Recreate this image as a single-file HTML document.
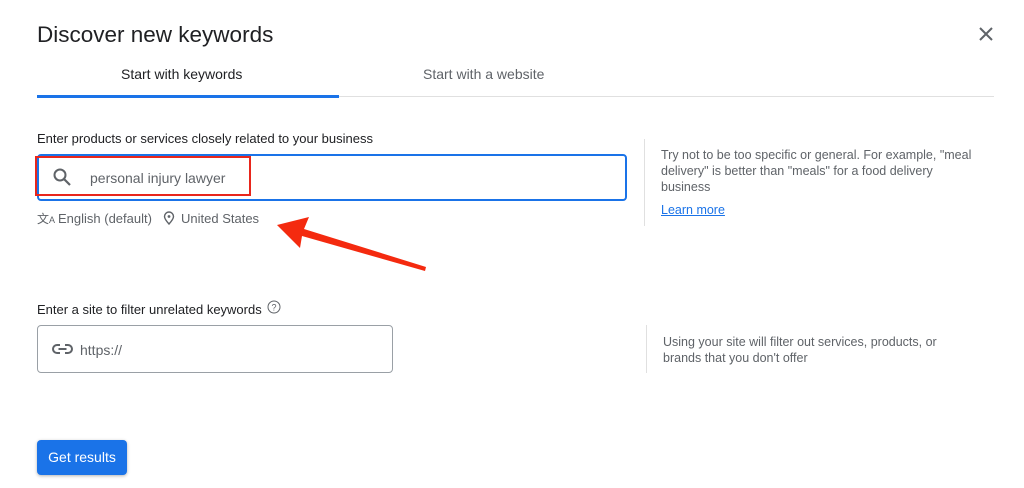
<!DOCTYPE html>
<html><head><style>
*{margin:0;padding:0;box-sizing:border-box}
body{width:1024px;height:488px;background:#fff;font-family:"Liberation Sans",Arial,sans-serif;position:relative;overflow:hidden;color:#3c4043}
.a{position:absolute;white-space:nowrap}
</style></head><body>
<div class="a" style="left:37px;top:22px;font-size:22.5px;color:#202124">Discover new keywords</div>
<svg class="a" style="left:978px;top:26px" width="16" height="16"><path d="M2 2L14 14M14 2L2 14" stroke="#5f6368" stroke-width="2"/></svg>
<div class="a" style="left:121px;top:66px;font-size:14px;color:#202124">Start with keywords</div>
<div class="a" style="left:423px;top:66px;font-size:14px;color:#5f6368">Start with a website</div>
<div class="a" style="left:37px;top:96px;width:957px;height:1px;background:#e0e0e0"></div>
<div class="a" style="left:37px;top:95px;width:302px;height:3px;background:#1a73e8"></div>

<div class="a" style="left:37px;top:131px;font-size:13px;color:#202124">Enter products or services closely related to your business</div>
<div class="a" style="left:37px;top:154px;width:590px;height:47px;border:2px solid #1a73e8;border-radius:4px"></div>
<div class="a" style="left:35px;top:156px;width:216px;height:40px;border:2px solid #e8261c"></div>
<svg class="a" style="left:52px;top:167px" width="20" height="20"><circle cx="8" cy="8" r="5.5" fill="none" stroke="#5f6368" stroke-width="2"/><path d="M12 12L18 18" stroke="#5f6368" stroke-width="2.2"/></svg>
<div class="a" style="left:90px;top:170px;font-size:14px;color:#5f6368">personal injury lawyer</div>
<div class="a" style="left:37px;top:210px;font-size:12px;color:#5f6368">文<span style="font-size:9px">A</span></div>
<div class="a" style="left:58px;top:211px;font-size:13px;color:#5f6368">English (default)</div>
<svg class="a" style="left:163px;top:211px" width="12" height="14"><path d="M6 13C6 13 1.5 8 1.5 5.5A4.5 4.5 0 0 1 10.5 5.5C10.5 8 6 13 6 13Z" fill="none" stroke="#5f6368" stroke-width="1.4"/><circle cx="6" cy="5.5" r="1.4" fill="#5f6368"/></svg>
<div class="a" style="left:181px;top:211px;font-size:13px;color:#5f6368">United States</div>
<svg class="a" style="left:0;top:0" width="1024" height="488"><path d="M277 225L309 217L304 229L426 267L425 271L302 236L300 248Z" fill="#f42a0f"/></svg>

<div class="a" style="left:644px;top:139px;width:1px;height:87px;background:#e0e0e0"></div>
<div class="a" style="left:661px;top:147px;font-size:12.5px;line-height:16px;color:#5f6368">Try not to be too specific or general. For example, "meal<br>delivery" is better than "meals" for a food delivery<br>business</div>
<div class="a" style="left:661px;top:203px;font-size:12.5px;color:#1a73e8;text-decoration:underline">Learn more</div>

<div class="a" style="left:37px;top:302px;font-size:13px;color:#202124">Enter a site to filter unrelated keywords</div>
<svg class="a" style="left:267px;top:300px" width="14" height="14"><circle cx="7" cy="7" r="6" fill="none" stroke="#5f6368" stroke-width="1"/><text x="7" y="10.5" font-size="9" text-anchor="middle" fill="#5f6368" font-family="Liberation Sans">?</text></svg>
<div class="a" style="left:37px;top:325px;width:356px;height:48px;border:1px solid #9aa0a6;border-radius:4px"></div>
<svg class="a" style="left:52px;top:342px" width="21" height="14"><path d="M8 3H5A4 4 0 0 0 5 11H8M13 3H16A4 4 0 0 1 16 11H13M6.5 7H14.5" fill="none" stroke="#5f6368" stroke-width="2"/></svg>
<div class="a" style="left:80px;top:342px;font-size:14px;color:#5f6368">https://</div>
<div class="a" style="left:646px;top:325px;width:1px;height:48px;background:#e0e0e0"></div>
<div class="a" style="left:663px;top:334px;font-size:12.5px;line-height:16px;color:#5f6368">Using your site will filter out services, products, or<br>brands that you don't offer</div>

<div class="a" style="left:37px;top:440px;width:90px;height:35px;background:#1a73e8;border-radius:4px;box-shadow:0 1px 3px rgba(0,0,0,.3);color:#fff;font-size:14px;line-height:35px;text-align:center">Get results</div>
</body></html>
